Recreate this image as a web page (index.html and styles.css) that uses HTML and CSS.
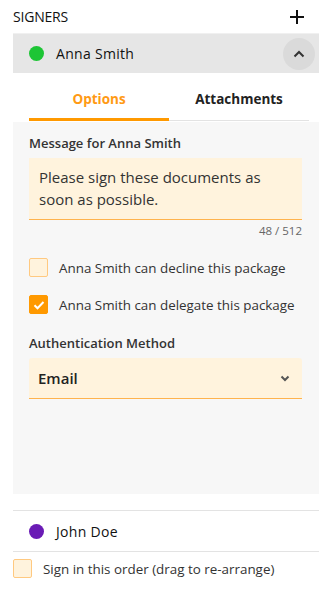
FILE: index.html
```html
<!DOCTYPE html>
<html>
<head>
<meta charset="utf-8">
<link rel="stylesheet" href="styles.css">
</head>
<body>
<div class="wrap">
  <div class="top">
    <span class="title">SIGNERS</span>
    <svg class="plus" width="16" height="16" viewBox="0 0 16 16"><path d="M8 1v14M1 8h14" stroke="#111" stroke-width="2" fill="none"/></svg>
  </div>
  <div class="signer open">
    <span class="dot green"></span>
    <span class="name">Anna Smith</span>
    <span class="toggle"><svg width="12" height="8" viewBox="0 0 12 8"><path d="M1.5 6.5L6 2l4.5 4.5" stroke="#333" stroke-width="2" fill="none"/></svg></span>
  </div>
  <div class="tabs">
    <div class="tab active">Options</div>
    <div class="tab">Attachments</div>
  </div>
  <div class="panel">
    <div class="label">Message for Anna Smith</div>
    <div class="textarea">Please sign these documents as soon as possible.</div>
    <div class="counter">48 / 512</div>
    <div class="check-row first"><span class="box"></span><span class="ctext">Anna Smith can decline this package</span></div>
    <div class="check-row"><span class="box on"><svg width="12" height="10" viewBox="0 0 12 10"><path d="M1.5 5.2l3 3L10.5 2" stroke="#fff" stroke-width="2" fill="none"/></svg></span><span class="ctext">Anna Smith can delegate this package</span></div>
    <div class="label auth">Authentication Method</div>
    <div class="select"><span>Email</span><svg width="10" height="7" viewBox="0 0 10 7"><path d="M1.5 1.5L5 5l3.5-3.5" stroke="#555" stroke-width="2" fill="none"/></svg></div>
  </div>
  <div class="signer closed">
    <span class="dot purple"></span>
    <span class="name">John Doe</span>
  </div>
  <div class="order"><span class="box"></span><span class="ctext">Sign in this order (drag to re-arrange)</span></div>
</div>
</body>
</html>
```
FILE: styles.css
```css
* { box-sizing: border-box; }
body { margin: 0; background: #fff; font-family: "Open Sans", "Noto Sans", sans-serif; color: #333; }
.wrap { width: 336px; padding: 0 17px 0 13px; }
.top { height: 33px; display: flex; align-items: center; justify-content: space-between; padding-right: 14px; }
.title { font-size: 14px; color: #111; letter-spacing: -0.2px; }
.plus { display: block; }
.signer { display: flex; align-items: center; height: 40px; }
.signer.open { background: #e6e6e6; border-top: 1px solid #f0f0f0; }
.dot { width: 15px; height: 15px; border-radius: 50%; margin-left: 16px; margin-right: 12px; flex: none; }
.green { background: #1dc535; }
.purple { background: #6a1bb5; }
.name { font-size: 14px; color: #111; letter-spacing: 0.3px; flex: 1; }
.toggle { width: 32px; height: 32px; border-radius: 50%; background: #dadada; display: flex; align-items: center; justify-content: center; margin-right: 4px; }
.tabs { display: flex; margin: 0 10px 0 16px; height: 48px; }
.tab { flex: 1; display: flex; align-items: center; justify-content: center; font-size: 13.5px; font-weight: 700; color: #222; border-bottom: 1px solid #e3e3e3; padding-top: 5px; }
.tab.active { color: #ff9a14; border-bottom: 3px solid #ff9900; padding-top: 7px; }
.panel { background: #f7f7f7; padding: 12px 17px 0 16px; height: 372px; margin-top: 1px; }
.label { font-size: 13px; font-weight: 600; color: #333; line-height: 18px; }
.textarea { margin-top: 6px; background: #fff3dd; border-bottom: 1px solid #ffb34d; height: 62px; padding: 8px 10px 0 10px; font-size: 15px; line-height: 22px; color: #333; }
.counter { text-align: right; font-size: 11.5px; color: #666; margin-top: 3px; line-height: 16px; }
.check-row { display: flex; align-items: center; height: 19px; margin-top: 18px; }
.check-row.first { margin-top: 19px; }
.box { width: 19px; height: 19px; border-radius: 2px; background: #fff3dd; border: 1px solid #ffc980; flex: none; display: flex; align-items: center; justify-content: center; }
.box.on { background: #ff9900; border-color: #ff9900; }
.ctext { font-size: 13.4px; color: #333; margin-left: 11px; }
.auth { margin-top: 20px; }
.select { margin-top: 6px; height: 41px; background: #fff3dd; border-bottom: 1px solid #ffb34d; border-radius: 3px 3px 0 0; display: flex; align-items: center; justify-content: space-between; padding: 0 12px 0 9px; }
.select span { font-size: 15px; font-weight: 600; color: #222; }
.signer.closed { margin-top: 16px; border-top: 1px solid #e3e3e3; border-bottom: 1px solid #e3e3e3; height: 42px; }
.order { display: flex; align-items: center; margin-top: 7px; }
.order .ctext { margin-left: 11px; }
```
